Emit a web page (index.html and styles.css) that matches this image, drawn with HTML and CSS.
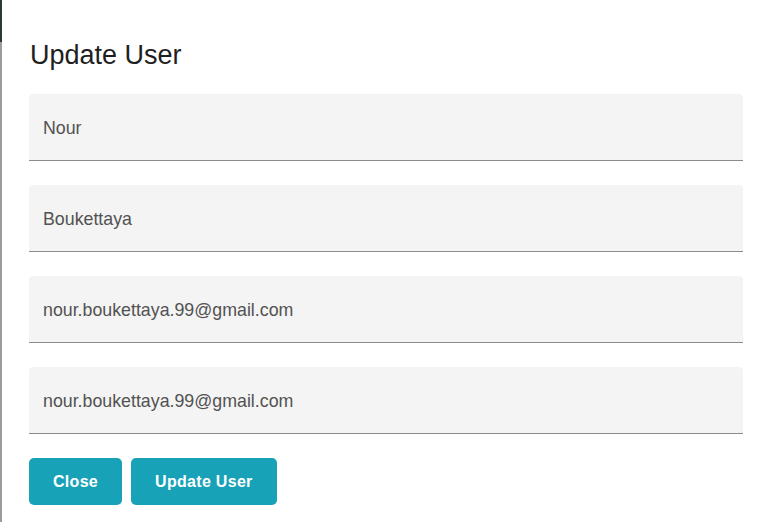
FILE: index.html
```html
<!DOCTYPE html>
<html lang="en">
<head>
<meta charset="utf-8">
<title>Update User</title>
<link rel="stylesheet" href="styles.css">
</head>
<body>
<div class="backdrop">
  <div class="dialog">
    <h2 class="dialog-title">Update User</h2>
    <form class="form">
      <div class="field"><input class="field-input" type="text" value="Nour"></div>
      <div class="field"><input class="field-input" type="text" value="Boukettaya"></div>
      <div class="field"><input class="field-input" type="text" value="nour.boukettaya.99@gmail.com"></div>
      <div class="field"><input class="field-input" type="text" value="nour.boukettaya.99@gmail.com"></div>
      <div class="actions">
        <button type="button" class="btn">Close</button>
        <button type="button" class="btn">Update User</button>
      </div>
    </form>
  </div>
</div>
</body>
</html>
```
FILE: styles.css
```css
html, body {
  margin: 0;
  padding: 0;
  height: 100%;
  overflow: hidden;
}
body {
  font-family: "Liberation Sans", Arial, sans-serif;
}
.backdrop {
  height: 100%;
  padding-left: 2px;
  background: linear-gradient(to bottom, #2e3a2f 0, #2e3a2f 42px, #9b9b9b 42px, #9b9b9b 100%);
}
.dialog {
  height: 100%;
  background: #fff;
  padding: 0 27px 0 27px;
  box-sizing: border-box;
}
.dialog-title {
  margin: 0;
  padding-top: 39px;
  font-size: 27px;
  line-height: 32px;
  font-weight: normal;
  color: #1f1f1f;
  padding-left: 1px;
}
.form {
  margin-top: 23px;
  display: flex;
  flex-direction: column;
  gap: 24px;
}
.field {
  background: #f4f4f4;
  border-radius: 4px 4px 0 0;
  border-bottom: 1px solid #8c8c8c;
  height: 66px;
  width: 714px;
}
.field-input {
  display: block;
  width: 100%;
  height: 100%;
  box-sizing: border-box;
  border: 0;
  background: transparent;
  padding: 2px 14px 0;
  font-family: "Liberation Sans", Arial, sans-serif;
  font-size: 17.8px;
  color: #525252;
  outline: none;
}
.actions {
  display: flex;
  gap: 9px;
  margin-top: 0;
}
.btn {
  height: 47px;
  padding: 0 24px;
  border: 0;
  border-radius: 5px;
  background: #18a2b8;
  color: #fff;
  font-family: "Liberation Sans", Arial, sans-serif;
  font-weight: bold;
  font-size: 16px;
  letter-spacing: 0.3px;
}
```
